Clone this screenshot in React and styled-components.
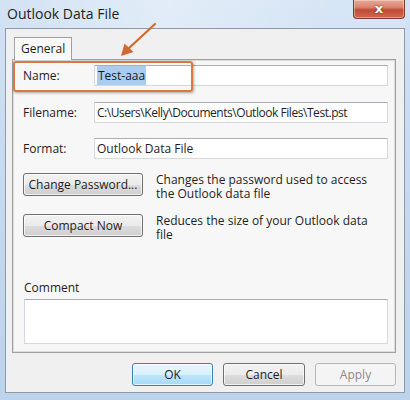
import React from "react";
import styled, { createGlobalStyle } from "styled-components";

const Global = createGlobalStyle`
  html, body { margin: 0; padding: 0; background: #fff; }
  body { font-family: "Open Sans", "Noto Sans", sans-serif; }
`;

const Window = styled.div`
  position: relative;
  width: 410px;
  height: 400px;
  box-sizing: border-box;
  background: linear-gradient(180deg, #d3e3f4 0%, #c9dcf1 30%, #bcd3ec 100%);
  display: flex;
  flex-direction: column;
  padding: 0 5px 7px 5px;
  overflow: hidden;
`;

const TitleBar = styled.div`
  height: 28px;
  flex: none;
  display: flex;
  align-items: center;
  justify-content: space-between;
  padding-left: 2px;
  background: linear-gradient(90deg, rgba(255,255,255,0) 0%, rgba(255,255,255,0.35) 40%, rgba(255,255,255,0.1) 80%);
`;

const Title = styled.div`
  font-size: 14px;
  color: #1e1e1e;
  margin-top: -2px;
`;

const CloseButton = styled.div`
  align-self: flex-start;
  width: 52px;
  height: 19px;
  box-sizing: border-box;
  border: 1px solid #7b3a33;
  border-top: none;
  border-radius: 0 0 4px 4px;
  background: linear-gradient(180deg, #e8a896 0%, #d98672 40%, #c24a38 55%, #cf6a4f 100%);
  color: #fff;
  font-family: "DejaVu Sans", sans-serif;
  font-weight: bold;
  font-size: 13px;
  line-height: 17px;
  text-align: center;
  text-shadow: 0 0 2px #5a1a10;
  box-shadow: inset 0 0 0 1px rgba(255,255,255,0.35);
`;

const Client = styled.div`
  flex: 1;
  background: #f0f0f0;
  border: 1px solid #8d99a6;
  display: flex;
  flex-direction: column;
  padding: 8px 8px 0 6px;
`;

const TabStrip = styled.div`
  display: flex;
  padding-left: 2px;
  position: relative;
  z-index: 1;
`;

const Tab = styled.div`
  width: 58px;
  height: 23px;
  box-sizing: border-box;
  border: 1px solid #a0a0a0;
  border-bottom: none;
  background: #f9f9f9;
  font-size: 12px;
  color: #1e1e1e;
  padding: 2px 0 0 6px;
  margin-bottom: -1px;
`;

const Panel = styled.div`
  height: 294px;
  box-sizing: border-box;
  border: 1px solid #a0a0a0;
  box-shadow: inset 0 0 0 1px #dcdcdc;
  background: #f7f7f7;
  padding: 5px 7px 8px 10px;
  display: flex;
  flex-direction: column;
`;

const FieldRow = styled.div`
  display: flex;
  align-items: center;
  height: 21px;
  margin-bottom: ${(p) => p.$gap}px;
`;

const Label = styled.div`
  width: 71px;
  flex: none;
  font-size: 12px;
  color: #1e1e1e;
`;

const Input = styled.div`
  flex: 1;
  height: 21px;
  box-sizing: border-box;
  border: 1px solid #d5d9de;
  border-top-color: #abadb3;
  background: #fff;
  font-size: 12px;
  letter-spacing: ${(p) => (p.$tight ? "-0.45px" : "0")};
  color: #1e1e1e;
  display: flex;
  align-items: center;
  padding-left: 2px;
  white-space: nowrap;
`;

const Selected = styled.span`
  background: #a9cdf0;
  color: #1a1a1a;
  padding: 1px 1px;
`;

const ActionRow = styled.div`
  display: flex;
  align-items: flex-start;
  margin-bottom: ${(p) => p.$gap}px;
`;

const Button = styled.div`
  width: ${(p) => p.$w}px;
  height: 23px;
  flex: none;
  box-sizing: border-box;
  border: 1px solid ${(p) => (p.$default ? "#3c7fb1" : p.$disabled ? "#b5b8bb" : "#707070")};
  border-radius: 3px;
  background: ${(p) =>
    p.$default
      ? "linear-gradient(180deg, #eaf6fd 0%, #d9f0fc 50%, #bee6fd 51%, #a7d9f5 100%)"
      : p.$disabled
      ? "#f4f4f4"
      : "linear-gradient(180deg, #f2f2f2 0%, #ebebeb 50%, #dddddd 51%, #cfcfcf 100%)"};
  box-shadow: inset 0 0 0 1px ${(p) => (p.$disabled ? "transparent" : "rgba(255,255,255,0.7)")};
  font-size: 12px;
  color: ${(p) => (p.$disabled ? "#8a8a8a" : "#1e1e1e")};
  display: flex;
  align-items: center;
  justify-content: center;
`;

const Description = styled.div`
  font-size: 12px;
  line-height: 14px;
  color: #1e1e1e;
  margin-left: 13px;
  width: 220px;
`;

const CommentBlock = styled.div`
  margin-top: auto;
  display: flex;
  flex-direction: column;
  padding-left: 1px;
`;

const CommentLabel = styled.div`
  font-size: 12px;
  color: #1e1e1e;
  margin-bottom: 3px;
`;

const TextArea = styled.div`
  height: 45px;
  box-sizing: border-box;
  border: 1px solid #d5d9de;
  border-top-color: #abadb3;
  background: #fff;
`;

const Footer = styled.div`
  display: flex;
  justify-content: flex-end;
  gap: 10px;
  padding: 10px 0 0 0;
`;

const Highlight = styled.div`
  position: absolute;
  left: 13px;
  top: 61px;
  width: 180px;
  height: 31px;
  box-sizing: border-box;
  border: 2.5px solid #d8793f;
  border-radius: 3px;
  box-shadow: 1px 1px 3px rgba(0,0,0,0.35);
  pointer-events: none;
`;

const ArrowSvg = styled.svg`
  position: absolute;
  left: 0;
  top: 0;
  pointer-events: none;
`;

export default function App() {
  return (
    <>
      <Global />
      <Window>
        <TitleBar>
          <Title>Outlook Data File</Title>
          <CloseButton>x</CloseButton>
        </TitleBar>
        <Client>
          <TabStrip>
            <Tab>General</Tab>
          </TabStrip>
          <Panel>
            <FieldRow $gap={16}>
              <Label>Name:</Label>
              <Input>
                <Selected>Test-aaa</Selected>
              </Input>
            </FieldRow>
            <FieldRow $gap={15}>
              <Label>Filename:</Label>
              <Input $tight>C:\Users\Kelly\Documents\Outlook Files\Test.pst</Input>
            </FieldRow>
            <FieldRow $gap={14}>
              <Label>Format:</Label>
              <Input>Outlook Data File</Input>
            </FieldRow>
            <ActionRow $gap={13}>
              <Button $w={120}>Change Password...</Button>
              <Description>
                Changes the password used to access the Outlook data file
              </Description>
            </ActionRow>
            <ActionRow $gap={0}>
              <Button $w={120}>Compact Now</Button>
              <Description>Reduces the size of your Outlook data file</Description>
            </ActionRow>
            <CommentBlock>
              <CommentLabel>Comment</CommentLabel>
              <TextArea />
            </CommentBlock>
          </Panel>
          <Footer>
            <Button $w={81} $default>OK</Button>
            <Button $w={82}>Cancel</Button>
            <Button $w={81} $disabled>Apply</Button>
          </Footer>
        </Client>
        <Highlight />
        <ArrowSvg width="410" height="400" viewBox="0 0 410 400">
          <line x1="155" y1="24" x2="128" y2="49" stroke="#d2692f" strokeWidth="2.2" strokeLinecap="round" />
          <polygon points="121,56 124.5,43.5 133.5,52" fill="#d2692f" />
        </ArrowSvg>
      </Window>
    </>
  );
}
